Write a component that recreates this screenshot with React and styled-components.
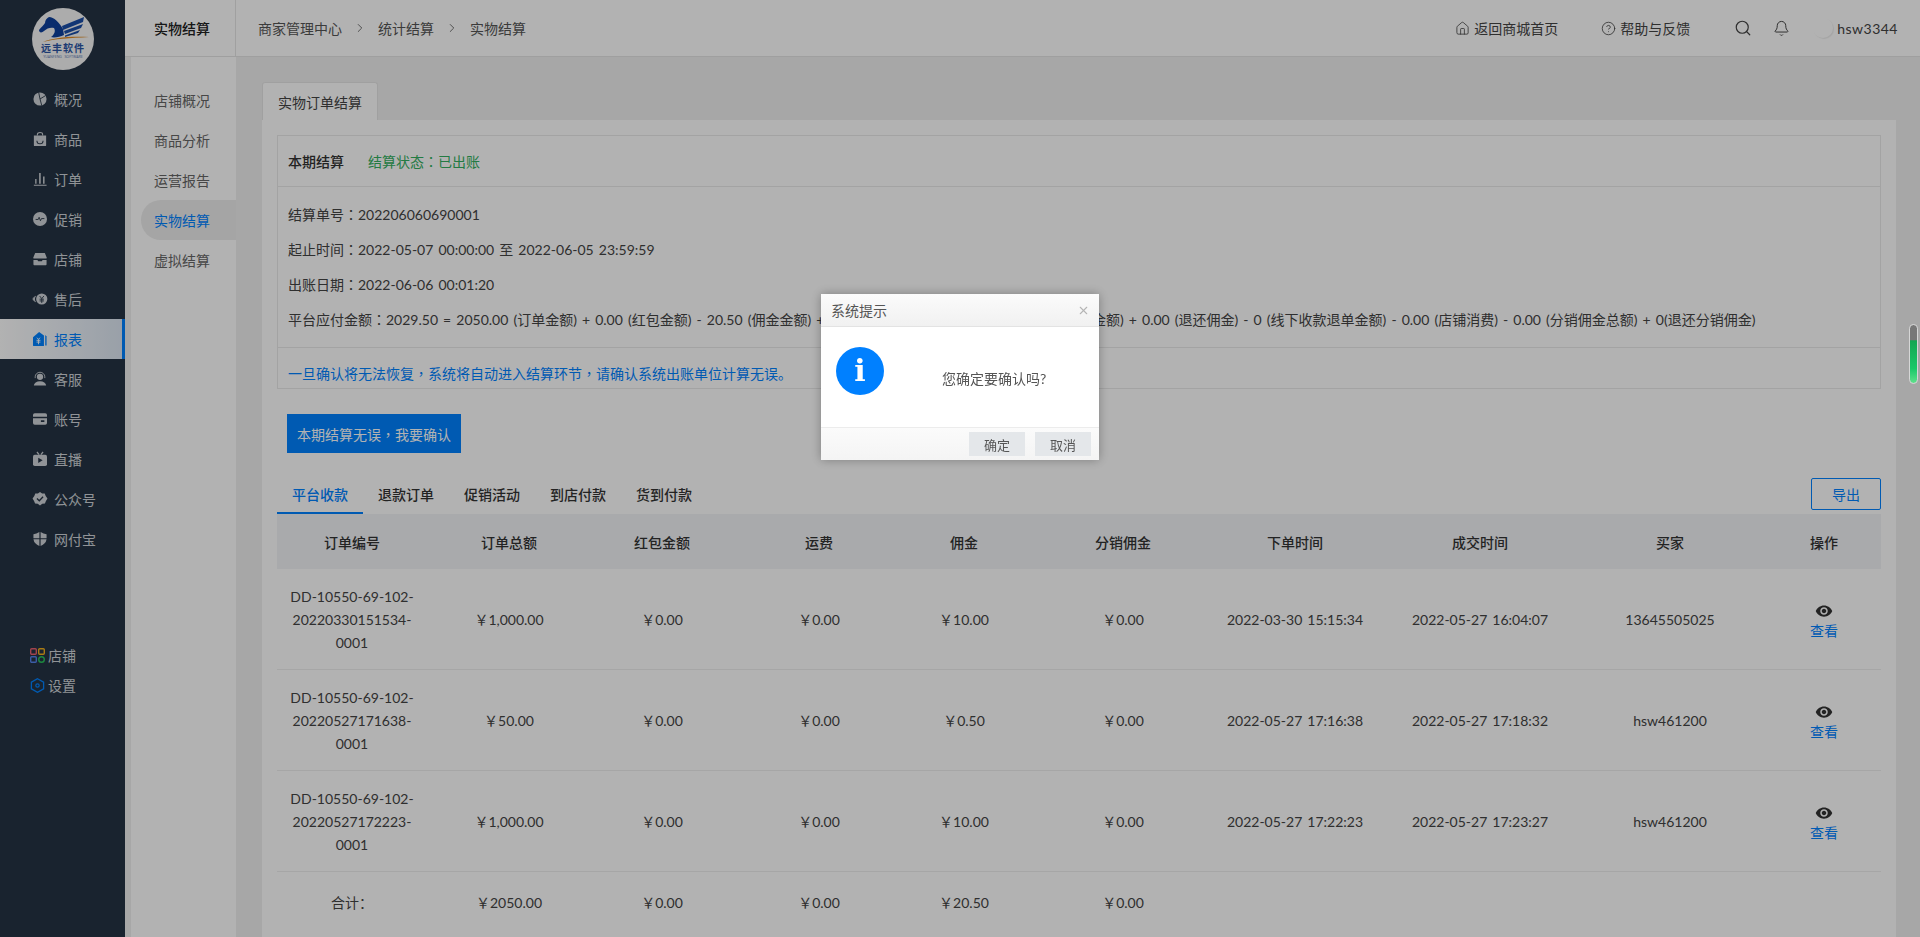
import React from 'react';
import styled, { createGlobalStyle } from 'styled-components';
import { Search, Bell, Home, CircleHelp, ChevronRight, X } from 'lucide-react';
import { MdVisibility } from 'react-icons/md';

const GlobalStyle = createGlobalStyle`
  html, body {
    margin: 0;
    padding: 0;
    height: 100%;
    overflow: hidden;
    background: #f0f0f0;
    font-family: Lato, "Noto Sans CJK SC", sans-serif;
    font-size: 14px;
    word-spacing: 1.5px;
    color: #333;
  }
  * { box-sizing: border-box; }
`;

const navItems = [
  { key: 'overview', label: '概况' },
  { key: 'goods', label: '商品' },
  { key: 'order', label: '订单' },
  { key: 'promo', label: '促销' },
  { key: 'store', label: '店铺' },
  { key: 'service', label: '售后' },
  { key: 'report', label: '报表', active: true },
  { key: 'support', label: '客服' },
  { key: 'account', label: '账号' },
  { key: 'live', label: '直播' },
  { key: 'wechat', label: '公众号' },
  { key: 'pay', label: '网付宝' },
];

const subItems = ['店铺概况', '商品分析', '运营报告', '实物结算', '虚拟结算'];
const listTabs = ['平台收款', '退款订单', '促销活动', '到店付款', '货到付款'];
const columns = ['订单编号', '订单总额', '红包金额', '运费', '佣金', '分销佣金', '下单时间', '成交时间', '买家', '操作'];

const orders = [
  {
    id: 'DD-10550-69-102-20220330151534-0001',
    total: '￥1,000.00',
    commission: '￥10.00',
    created: '2022-03-30 15:15:34',
    done: '2022-05-27 16:04:07',
    buyer: '13645505025',
  },
  {
    id: 'DD-10550-69-102-20220527171638-0001',
    total: '￥50.00',
    commission: '￥0.50',
    created: '2022-05-27 17:16:38',
    done: '2022-05-27 17:18:32',
    buyer: 'hsw461200',
  },
  {
    id: 'DD-10550-69-102-20220527172223-0001',
    total: '￥1,000.00',
    commission: '￥10.00',
    created: '2022-05-27 17:22:23',
    done: '2022-05-27 17:23:27',
    buyer: 'hsw461200',
  },
];

// hand drawn menu icons, all on a 16 box
const NavIcon = ({ name }) => {
  const shapes = {
    overview: (
      <>
        <circle cx="8" cy="8" r="7.5" fill="currentColor" />
        <path d="M8 8 L6.5 .5 M8 8 L14.5 4 M8 8 L10 15.5" stroke="#253344" strokeWidth="1" fill="none" />
      </>
    ),
    goods: (
      <>
        <path d="M1 4 H15 V15 a1 1 0 0 1 -1 1 H2 a1 1 0 0 1 -1 -1 Z" fill="currentColor" />
        <path d="M5 4 V2.5 a3 2 0 0 1 6 0 V4" stroke="currentColor" strokeWidth="1.2" fill="none" />
        <path d="M4.5 10 a3.5 3.5 0 0 0 7 0" stroke="#253344" strokeWidth="1.2" fill="none" />
      </>
    ),
    order: (
      <path d="M1 14.5 H15.5 V15.7 H1 Z M2.5 8 H4 V13.5 H2.5 Z M7 1 H8.8 V13.5 H7 Z M11.5 5 H13.2 V13.5 H11.5 Z" fill="currentColor" />
    ),
    promo: (
      <>
        <circle cx="8" cy="8" r="8" fill="currentColor" />
        <path d="M3 8.5 H6 L7 6 L8.5 10 L9.7 7.5 H13" stroke="#253344" strokeWidth="1" fill="none" />
      </>
    ),
    store: (
      <>
        <path d="M2.5 1 H13.5 L15.5 6 V7.5 H.5 V6 Z" fill="currentColor" />
        <path d="M.5 9 H5 L6 10.5 H10 L11 9 H15.5 V14 a1 1 0 0 1 -1 1 H1.5 a1 1 0 0 1 -1 -1 Z" fill="currentColor" />
      </>
    ),
    service: (
      <>
        <circle cx="10" cy="8" r="6.4" fill="currentColor" />
        <path d="M7.5 4.5 L10 7.5 L12.5 4.5 M7.5 8.2 H12.5 M7.5 10.2 H12.5 M10 7.5 V12.5" stroke="#253344" strokeWidth="1" fill="none" />
        <path d="M2.8 4.5 a6 6 0 0 0 0 7 M.6 6.2 a4 4 0 0 0 0 3.6" stroke="currentColor" strokeWidth="1.2" fill="none" />
      </>
    ),
    report: (
      <>
        <path d="M0 6 L7 0 L12.5 4 V16 H1 a1 1 0 0 1 -1 -1 Z" fill="currentColor" />
        <path d="M14 3.5 L15.5 5 V15.5 H14 Z" fill="currentColor" />
        <path d="M4.5 6.5 L6.3 8.5 L8 6.5 M4 9.5 H8.5 M4 11.5 H8.5 M6.3 8.5 V14" stroke="#fff" strokeWidth="1" fill="none" />
      </>
    ),
    support: (
      <>
        <path d="M1 15.5 a7 5 0 0 1 14 0 Z" fill="currentColor" />
        <circle cx="8" cy="5.5" r="3.6" fill="currentColor" />
        <path d="M2.5 7 V5.5 a5.5 5.2 0 0 1 11 0 V7" stroke="currentColor" strokeWidth="1" fill="none" />
      </>
    ),
    account: (
      <>
        <path d="M2 1.5 H14 a2 2 0 0 1 2 2 V5.5 H0 V3.5 a2 2 0 0 1 2 -2 Z" fill="currentColor" />
        <path d="M0 7 H16 V12.5 a2 2 0 0 1 -2 2 H2 a2 2 0 0 1 -2 -2 Z M9 9.5 V11.5 H13 V9.5 Z" fill="currentColor" fillRule="evenodd" />
      </>
    ),
    live: (
      <>
        <rect x="0" y="3" width="16" height="13" rx="2" fill="currentColor" />
        <path d="M4.5 0 L7 3 M11.5 0 L9 3" stroke="currentColor" strokeWidth="1.4" />
        <path d="M6 6.5 L11 9.5 L6 12.5 Z" fill="#253344" />
      </>
    ),
    wechat: (
      <>
        <path d="M8 0 L10.4 1.6 L13.4 1.8 L14.5 4.6 L16.5 7.5 L14.8 10.2 L13.6 13 L10.6 13.4 L8 15.5 L5.4 13.4 L2.4 13 L1.2 10.2 L-.5 7.5 L1.5 4.6 L2.6 1.8 L5.6 1.6 Z" fill="currentColor" />
        <path d="M4.5 7.5 L7.2 10 L11.5 5.5" stroke="#253344" strokeWidth="1.5" fill="none" />
      </>
    ),
    pay: (
      <>
        <path d="M7.3 0 V7 H.5 V2.5 Q4 2 7.3 0 Z M8.7 0 Q12 2 15.5 2.5 V7 H8.7 Z M.5 8.4 H7.3 V16 Q1.5 14 .5 8.4 Z M8.7 8.4 H15.5 Q14.5 14 8.7 16 Z" fill="currentColor" />
      </>
    ),
  };
  return (
    <NavSvg viewBox="0 0 16 16" aria-hidden="true">
      {shapes[name]}
    </NavSvg>
  );
};

const Logo = () => (
  <LogoSvg viewBox="0 0 62 62">
    <circle cx="31" cy="31" r="31" fill="#f6f6f6" />
    <path d="M7 22 C9 19 12 17 13 15 C13 12 15 10 17 9 C22 9 27 14 31 21 L32 27 C28 29 22 30 19 29 C22 27 24 23 22 20 C19 19 15 20 12 23 C10 25 7 25 7 22 Z" fill="#0d3f9c" />
    <path d="M30 18 L52 9 L51 14 L31 22 Z M32 23 L51 16 L49 20 L33 26 Z M33 27.5 L48 22 L46 25 L33 29 Z" fill="#1b4ea8" />
    <path d="M11 34 C20 30 36 28 57 29 C38 30 22 31 11 34 Z" fill="#e08a22" />
    <text x="31" y="44" textAnchor="middle" fontSize="10" fontWeight="700" fill="#2a55a5" fontFamily="Noto Sans CJK SC, sans-serif" letterSpacing="1">远丰软件</text>
    <text x="31" y="49.5" textAnchor="middle" fontSize="3.6" fill="#5a79b5" fontFamily="Open Sans, sans-serif">YUANFENG SOFTWARE</text>
  </LogoSvg>
);

const App = () => (
  <>
    <GlobalStyle />
    <Page>
      <Sidebar>
        <LogoWrap>
          <Logo />
        </LogoWrap>
        <NavList>
          {navItems.map((item) => (
            <NavItem key={item.key} $active={item.active}>
              <NavIcon name={item.key} />
              {item.label}
            </NavItem>
          ))}
        </NavList>
        <BottomList>
          <BottomItem>
            <svg width="15" height="15" viewBox="0 0 15 15" aria-hidden="true">
              <rect x=".7" y=".7" width="5.6" height="5.6" rx="1" fill="none" stroke="#e8606f" strokeWidth="1.4" />
              <rect x="8.7" y=".7" width="5.6" height="5.6" rx="1" fill="none" stroke="#f2b01e" strokeWidth="1.4" />
              <rect x=".7" y="8.7" width="5.6" height="5.6" rx="1" fill="none" stroke="#5585ee" strokeWidth="1.4" />
              <circle cx="11.5" cy="11.5" r="2.8" fill="none" stroke="#2ac35c" strokeWidth="1.4" />
            </svg>
            店铺
          </BottomItem>
          <BottomItem>
            <svg width="15" height="15" viewBox="0 0 15 15" aria-hidden="true">
              <path d="M7.5 .7 L13.6 4.1 V10.9 L7.5 14.3 L1.4 10.9 V4.1 Z" fill="none" stroke="#0082ff" strokeWidth="1.3" />
              <circle cx="7.5" cy="7.5" r="1.7" fill="none" stroke="#0082ff" strokeWidth="1.2" />
            </svg>
            设置
          </BottomItem>
        </BottomList>
      </Sidebar>

      <Main>
        <TopBar>
          <SectionTitle>实物结算</SectionTitle>
          <Breadcrumb>
            <span>商家管理中心</span>
            <ChevronRight size={14} strokeWidth={1.4} />
            <span>统计结算</span>
            <ChevronRight size={14} strokeWidth={1.4} />
            <span>实物结算</span>
          </Breadcrumb>
          <TopActions>
            <TopLink $width="146px">
              <Home size={15} strokeWidth={1.3} />
              返回商城首页
            </TopLink>
            <TopLink $width="133px">
              <CircleHelp size={15} strokeWidth={1.3} />
              帮助与反馈
            </TopLink>
            <IconSlot>
              <Search size={18} strokeWidth={1.6} />
            </IconSlot>
            <IconSlot>
              <Bell size={17} strokeWidth={1.4} />
            </IconSlot>
            <Avatar />
            <UserName>hsw3344</UserName>
          </TopActions>
        </TopBar>

        <Body>
          <SubNav>
            {subItems.map((label) => (
              <SubItem key={label} $active={label === '实物结算'}>
                {label}
              </SubItem>
            ))}
          </SubNav>

          <Content>
            <PageTab>实物订单结算</PageTab>
            <Card>
              <SummaryPanel>
                <SummaryHead>
                  <strong>本期结算</strong>
                  <StatusText>结算状态<Mark>：</Mark>已出账</StatusText>
                </SummaryHead>
                <SummaryBody>
                  <SummaryRow>结算单号<Mark>：</Mark>202206060690001</SummaryRow>
                  <SummaryRow>起止时间<Mark>：</Mark>2022-05-07 00:00:00 至 2022-06-05 23:59:59</SummaryRow>
                  <SummaryRow>出账日期<Mark>：</Mark>2022-06-06 00:01:20</SummaryRow>
                  <SummaryRow>
                    平台应付金额<Mark>：</Mark>2029.50 = 2050.00 (订单金额) + 0.00 (红包金额) - 20.50 (佣金金额) + 0.00 (运费) - 0.00 (退单) + 0.00 (退还红包金额) + 0.00 (退还佣金) - 0 (线下收款退单金额) - 0.00 (店铺消费) - 0.00 (分销佣金总额) + 0(退还分销佣金)
                  </SummaryRow>
                </SummaryBody>
                <SummaryNote>一旦确认将无法恢复<Mark>，</Mark>系统将自动进入结算环节<Mark>，</Mark>请确认系统出账单位计算无误。</SummaryNote>
              </SummaryPanel>

              <ConfirmButton>本期结算无误<Mark>，</Mark>我要确认</ConfirmButton>

              <ListBar>
                <ListTabs>
                  {listTabs.map((tab, i) => (
                    <ListTab key={tab} $active={i === 0}>
                      {tab}
                    </ListTab>
                  ))}
                </ListTabs>
                <ExportButton>导出</ExportButton>
              </ListBar>

              <TableHead>
                {columns.map((c, i) => (
                  <HeadCell key={c} $first={i === 0}>
                    {c}
                  </HeadCell>
                ))}
              </TableHead>
              {orders.map((o) => (
                <TableRow key={o.id}>
                  <Cell $first>{o.id}</Cell>
                  <Cell>{o.total}</Cell>
                  <Cell>￥0.00</Cell>
                  <Cell>￥0.00</Cell>
                  <Cell>{o.commission}</Cell>
                  <Cell>￥0.00</Cell>
                  <Cell>{o.created}</Cell>
                  <Cell>{o.done}</Cell>
                  <Cell>{o.buyer}</Cell>
                  <Cell>
                    <ViewLink>
                      <MdVisibility size={18} color="#333" />
                      查看
                    </ViewLink>
                  </Cell>
                </TableRow>
              ))}
              <TotalRow>
                <Cell $first>合计：</Cell>
                <Cell>￥2050.00</Cell>
                <Cell>￥0.00</Cell>
                <Cell>￥0.00</Cell>
                <Cell>￥20.50</Cell>
                <Cell>￥0.00</Cell>
              </TotalRow>
            </Card>
          </Content>
        </Body>
      </Main>

      <Overlay />

      <Dialog>
        <DialogHead>
          系统提示
          <CloseIcon size={13} strokeWidth={2} />
        </DialogHead>
        <DialogBody>
          <InfoBadge>
            <InfoGlyph>i</InfoGlyph>
          </InfoBadge>
          <DialogText>您确定要确认吗?</DialogText>
        </DialogBody>
        <DialogFoot>
          <DialogButton>确定</DialogButton>
          <DialogButton>取消</DialogButton>
        </DialogFoot>
      </Dialog>

      <ScrollPill />
    </Page>
  </>
);

const GRID = '170px 124px 182px 132px 158px 160px 184px 186px 194px 114px';

const Page = styled.div`
  display: flex;
  width: 100%;
  height: 937px;
  overflow: hidden;
  background: #f0f0f0;
`;

const Sidebar = styled.aside`
  display: flex;
  flex-direction: column;
  flex: 0 0 125px;
  background: #253344;
  color: #cfd3d8;
`;

const LogoWrap = styled.div`
  height: 79px;
  padding: 8px 0 0 32px;
`;

const LogoSvg = styled.svg`
  display: block;
  width: 62px;
  height: 62px;
`;

const NavList = styled.nav`
  display: flex;
  flex-direction: column;
`;

const NavItem = styled.a`
  display: flex;
  align-items: center;
  gap: 7px;
  height: 40px;
  padding-left: 33px;
  font-size: 14px;
  color: ${(p) => (p.$active ? '#0082ff' : '#cfd3d8')};
  ${(p) =>
    p.$active &&
    `
    background: linear-gradient(90deg, #ffffff, #dce6f2);
    border-right: 3px solid #0082ff;
  `}
`;

const NavSvg = styled.svg`
  flex: none;
  width: 14px;
  height: 14px;
  overflow: visible;
`;

const BottomList = styled.div`
  display: flex;
  flex-direction: column;
  margin-top: 81px;
`;

const BottomItem = styled.a`
  display: flex;
  align-items: center;
  gap: 3px;
  height: 30px;
  padding-left: 30px;
  font-size: 14px;
  color: #cfd3d8;
`;

const Main = styled.div`
  display: flex;
  flex-direction: column;
  flex: 1;
  min-width: 0;
`;

const TopBar = styled.header`
  display: flex;
  align-items: center;
  flex: 0 0 57px;
  background: #fff;
  border-bottom: 1px solid #e4e4e4;
`;

const SectionTitle = styled.div`
  display: flex;
  align-items: center;
  justify-content: center;
  width: 111px;
  height: 100%;
  padding-left: 4px;
  font-weight: 500;
  font-size: 14px;
  color: #222;
  border-right: 1px solid #e6e6e6;
`;

const Breadcrumb = styled.div`
  display: flex;
  align-items: center;
  gap: 10px;
  padding-left: 22px;
  color: #555;
  font-size: 14px;
  svg {
    margin: 0 1px;
  }
`;

const TopActions = styled.div`
  display: flex;
  align-items: center;
  margin-left: auto;
  padding-right: 22px;
  color: #444;
`;

const TopLink = styled.a`
  display: flex;
  align-items: center;
  gap: 4px;
  width: ${(p) => p.$width};
`;

const IconSlot = styled.span`
  display: flex;
  width: 39px;
`;

const Avatar = styled.span`
  width: 20px;
  height: 20px;
  margin-left: 1px;
  border-radius: 50%;
  box-shadow: 1px 1px 1px rgba(0, 0, 0, 0.08);
`;

const UserName = styled.span`
  margin-left: 4px;
  letter-spacing: 0.5px;
`;

const Body = styled.div`
  display: flex;
  flex: 1;
  min-height: 0;
`;

const SubNav = styled.div`
  display: flex;
  flex-direction: column;
  flex: 0 0 105px;
  margin-left: 6px;
  padding-top: 23px;
  background: #fff;
`;

const SubItem = styled.a`
  display: flex;
  align-items: center;
  height: 40px;
  margin-left: 10px;
  padding-left: 13px;
  border-radius: 20px 0 0 20px;
  color: ${(p) => (p.$active ? '#0082ff' : '#666')};
  background: ${(p) => (p.$active ? '#ececec' : 'transparent')};
`;

const Content = styled.main`
  flex: 1;
  min-width: 0;
  padding: 25px 24px 0 26px;
`;

const PageTab = styled.div`
  display: flex;
  align-items: center;
  justify-content: center;
  width: 116px;
  height: 38px;
  background: #fff;
  border: 1px solid #e6e6e6;
  border-bottom: 0;
  border-radius: 3px 3px 0 0;
  color: #444;
`;

const Card = styled.section`
  padding: 15px 15px 30px;
  background: #fff;
`;

const SummaryPanel = styled.div`
  border: 1px solid #eaeaea;
`;

const SummaryHead = styled.div`
  display: flex;
  align-items: center;
  gap: 24px;
  height: 51px;
  padding-left: 10px;
  border-bottom: 1px solid #eaeaea;
  strong {
    color: #333;
    font-weight: 500;
  }
`;

const StatusText = styled.span`
  color: #33b060;
`;

// the fullwidth colon and comma sit centred in the reference, as in the TC cut
const Mark = styled.span`
  font-family: "Noto Sans CJK TC", sans-serif;
`;

const SummaryBody = styled.div`
  padding: 10px;
  border-bottom: 1px solid #eaeaea;
`;

const SummaryRow = styled.div`
  height: 35px;
  line-height: 35px;
  white-space: nowrap;
  color: #444;
`;

const SummaryNote = styled.div`
  height: 40px;
  line-height: 40px;
  padding: 5px 0 0 10px;
  color: #0082ff;
`;

const ConfirmButton = styled.button`
  display: block;
  width: 174px;
  height: 39px;
  margin: 25px 0 0 10px;
  padding: 0;
  border: 0;
  background: #0082ff;
  color: #fff;
  font: inherit;
`;

const ListBar = styled.div`
  display: flex;
  align-items: flex-end;
  justify-content: space-between;
  height: 61px;
`;

const ListTabs = styled.div`
  display: flex;
`;

const ListTab = styled.a`
  display: flex;
  align-items: center;
  justify-content: center;
  width: 86px;
  height: 38px;
  font-weight: 500;
  color: ${(p) => (p.$active ? '#0082ff' : '#333')};
  border-bottom: 2px solid ${(p) => (p.$active ? '#0082ff' : 'transparent')};
`;

const ExportButton = styled.button`
  width: 70px;
  height: 32px;
  margin-bottom: 4px;
  border: 1px solid #0082ff;
  border-radius: 2px;
  background: #fff;
  color: #0082ff;
  font: inherit;
`;

const TableHead = styled.div`
  display: grid;
  grid-template-columns: ${GRID};
  align-items: center;
  height: 55px;
  background: #f2f4f7;
`;

const HeadCell = styled.div`
  text-align: center;
  font-weight: 500;
  color: #333;
  padding: ${(p) => (p.$first ? '0 30px 0 10px' : '0')};
`;

const TableRow = styled.div`
  display: grid;
  grid-template-columns: ${GRID};
  align-items: center;
  height: 101px;
  border-bottom: 1px solid #eee;
`;

const TotalRow = styled(TableRow)`
  height: 60px;
  border-bottom: 0;
`;

const Cell = styled.div`
  text-align: center;
  line-height: 23px;
  color: #444;
  padding: ${(p) => (p.$first ? '0 30px 0 10px' : '0')};
`;

const ViewLink = styled.a`
  display: flex;
  flex-direction: column;
  align-items: center;
  gap: 1px;
  margin-top: 4px;
  line-height: 20px;
  color: #0082ff;
`;

const Overlay = styled.div`
  position: fixed;
  inset: 0;
  background: rgba(0, 0, 0, 0.3);
`;

const Dialog = styled.div`
  position: fixed;
  left: 821px;
  top: 294px;
  display: flex;
  flex-direction: column;
  width: 278px;
  height: 166px;
  background: #fff;
  box-shadow: 0 0 10px rgba(0, 0, 0, 0.3);
`;

const DialogHead = styled.div`
  display: flex;
  align-items: center;
  justify-content: space-between;
  flex: 0 0 33px;
  padding: 0 9px 0 10px;
  background: linear-gradient(#fbfbfb, #f1f1f1);
  border-bottom: 1px solid #e3e3e3;
  color: #555;
`;

const CloseIcon = styled(X)`
  color: #b5b5b5;
`;

const DialogBody = styled.div`
  display: flex;
  flex: 1;
  padding: 20px 0 0 15px;
`;

const InfoBadge = styled.span`
  display: flex;
  align-items: center;
  justify-content: center;
  width: 48px;
  height: 48px;
  border-radius: 50%;
  background: #0080ff;
`;

const InfoGlyph = styled.span`
  font-family: "DejaVu Serif", serif;
  font-weight: 700;
  font-size: 30px;
  line-height: 1;
  color: #fff;
`;

const DialogText = styled.div`
  flex: 1;
  padding: 21px 0 0 58px;
  font-size: 14px;
  color: #555;
`;

const DialogFoot = styled.div`
  display: flex;
  justify-content: flex-end;
  align-items: center;
  gap: 10px;
  flex: 0 0 33px;
  padding-right: 8px;
  background: linear-gradient(#fbfbfb, #f4f4f4);
  border-top: 1px solid #ececec;
`;

const DialogButton = styled.button`
  width: 56px;
  height: 24px;
  padding: 0;
  border: 0;
  background: #e4e7ea;
  color: #555;
  font: inherit;
  font-size: 13px;
`;

const ScrollPill = styled.div`
  position: fixed;
  left: 1909px;
  top: 324px;
  width: 9px;
  height: 60px;
  border: 1px solid #d6d6d6;
  border-radius: 5px;
  background: linear-gradient(#777 0, #777 26%, #14a552 27%, #19c868 75%, #5fe08c 100%);
`;

export default App;
